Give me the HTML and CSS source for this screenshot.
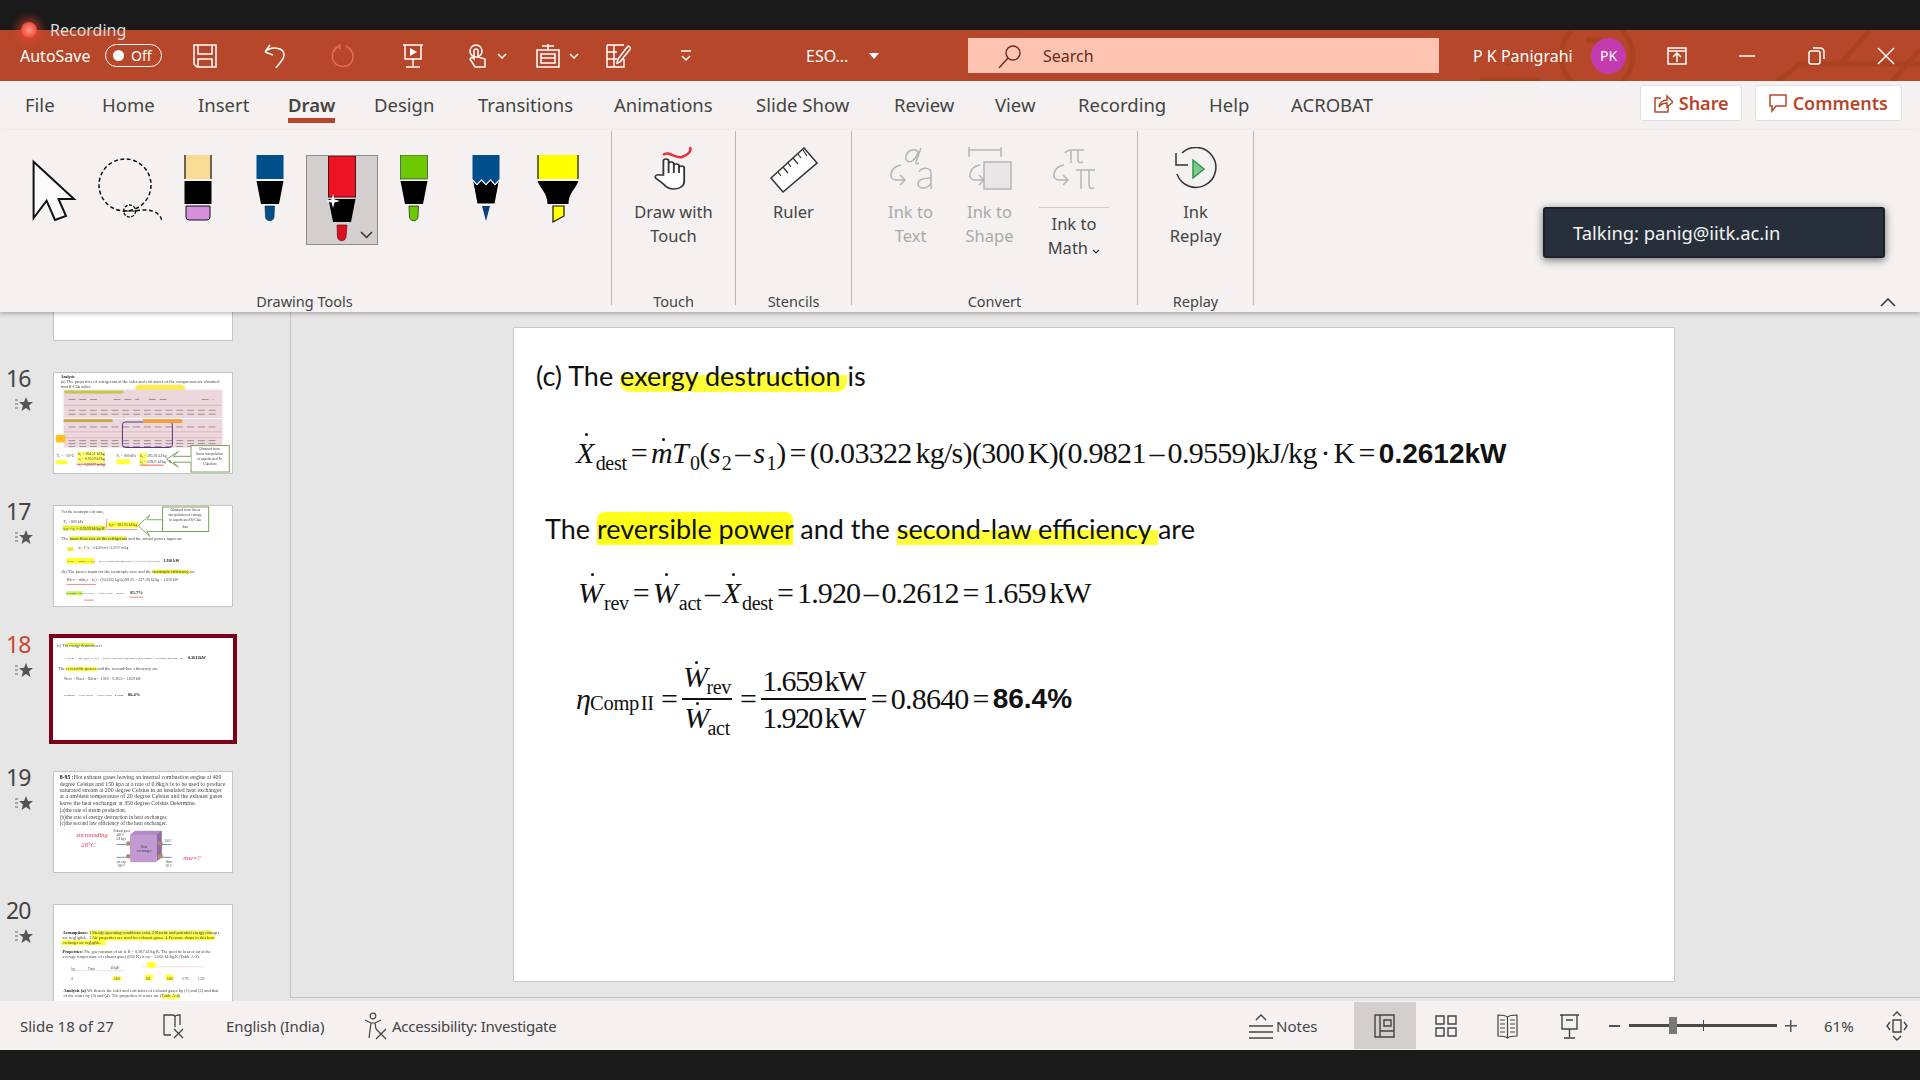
FILE: index.html
```html
<!DOCTYPE html>
<html lang="en">
<head>
    <meta charset="UTF-8">
    <title>ESO - PowerPoint</title>
    <link rel="stylesheet" href="styles.css">
</head>
<body>
    <div class="screen">
        <div class="blackbar"></div>

        <div class="recording">
            <span class="rec_dot"></span>
            <span>Recording</span>
        </div>

        <!-- title bar -->
        <header class="titlebar">
            <svg class="circuit" width="460" height="51" viewBox="0 0 460 51">
                <circle cx="137" cy="26" r="36" fill="none" stroke="#a8421f" stroke-width="5"/>
                <path d="M125 10h24M137 10v14M20 50h60M340 34h120M340 34l-22 17M410 0l-30 34M460 20l-28 31" fill="none" stroke="#a8421f" stroke-width="5"/>
                <circle cx="48" cy="30" r="5" fill="none" stroke="#a8421f" stroke-width="2"/>
            </svg>
            <span class="autosave">AutoSave</span>
            <span class="toggle"><i></i><b>Off</b></span>
            <svg class="ti ti_save" width="24" height="24" viewBox="0 0 24 24"><path d="M1 1h22v22H4l-3-3zM5 1v9h14V1M5 23v-8h14v8"/></svg>
            <svg class="ti ti_undo" width="24" height="24" viewBox="0 0 24 24"><path d="M2 8l5-7M2 8l8 3M2 8c6-6 19-5 19 3 0 5-5 8-8 13"/></svg>
            <svg class="ti ti_redo" width="24" height="24" viewBox="0 0 24 24"><path d="M8 2C2 5 0 11 2 16c3 7 13 9 18 3 4-6 2-13-5-17M9 0v5"/></svg>
            <svg class="ti ti_show" width="24" height="24" viewBox="0 0 24 24"><path d="M2 1h20M4 1v14h16V1M12 15v7M5 23h14"/><path class="fill" d="M9 4l7 4-7 4z"/></svg>
            <svg class="ti ti_touch" width="24" height="24" viewBox="0 0 24 24"><circle cx="9" cy="7" r="6"/><path d="M7 7v8l-2-2-2 2 5 8h10v-8l-7-2V7a2 2 0 0 0-4 0z"/></svg>
            <svg class="chev" width="10" height="6" viewBox="0 0 10 6"><path d="M1 1l4 4 4-4"/></svg>
            <svg class="ti ti_obj" width="24" height="24" viewBox="0 0 24 24"><path d="M1 6h22v17H1zM5 10h14v9H5zM12 6V0M6 2h12M5 14h14"/></svg>
            <svg class="chev ch_obj" width="10" height="6" viewBox="0 0 10 6"><path d="M1 1l4 4 4-4"/></svg>
            <svg class="ti ti_form" width="25" height="24" viewBox="0 0 25 24"><path d="M1 1h17M1 1v22h17v-8M1 8h10M1 15h10M8 1v22M12 15l10-13 3 2-11 14-3 1z"/></svg>
            <svg class="ti_more" width="12" height="14" viewBox="0 0 12 14"><path d="M1 2h10M2 7l4 4 4-4" fill="none" stroke="#fff" stroke-width="1.5"/></svg>
            <span class="docname">ESO...</span>
            <span class="docarrow"></span>
            <div class="searchbox">
                <svg width="24" height="24" viewBox="0 0 24 24"><circle cx="15" cy="9" r="7" fill="none" stroke="#6b2a18" stroke-width="1.4"/><path d="M10 14L1 24" stroke="#6b2a18" stroke-width="1.4"/></svg>
                <span>Search</span>
            </div>
            <span class="username">P K Panigrahi</span>
            <span class="avatar">PK</span>
            <svg class="ti win_disp" width="20" height="20" viewBox="0 0 20 20"><path d="M1 2h18v16H1zM1 5h18M10 16V8M6 11l4-4 4 4"/></svg>
            <svg class="ti win_min" width="16" height="2" viewBox="0 0 16 2"><path d="M0 1h16"/></svg>
            <svg class="ti win_max" width="17" height="18" viewBox="0 0 17 18"><rect x="1" y="4" width="11" height="13" rx="2"/><path d="M5 1h7c3 0 4 1 4 4v7"/></svg>
            <svg class="ti win_close" width="18" height="18" viewBox="0 0 18 18"><path d="M1 1l16 16M17 1L1 17"/></svg>
        </header>

        <!-- tabs -->
        <nav class="tabs">
            <span class="tab">File</span>
            <span class="tab">Home</span>
            <span class="tab">Insert</span>
            <span class="tab tab_on">Draw</span>
            <span class="tab">Design</span>
            <span class="tab">Transitions</span>
            <span class="tab">Animations</span>
            <span class="tab">Slide Show</span>
            <span class="tab">Review</span>
            <span class="tab">View</span>
            <span class="tab">Recording</span>
            <span class="tab">Help</span>
            <span class="tab">ACROBAT</span>
            <span></span>
            <span class="tabbtn tabbtn_share">
                <svg width="20" height="20" viewBox="0 0 20 20"><path d="M8 5H2v14h13v-6M6 14c1-5 4-7 8-7V3l6 6-6 5v-4c-4 0-6 1-8 4z" fill="none" stroke="#b7472a" stroke-width="1.5"/></svg>
                Share
            </span>
            <span class="tabbtn">
                <svg width="18" height="20" viewBox="0 0 18 20"><path d="M1 2h16v11H7l-4 5v-5H1z" fill="none" stroke="#b7472a" stroke-width="1.5"/></svg>
                Comments
            </span>
        </nav>

        <!-- ribbon -->
        <section class="ribbon">
            <div class="group g_tools">
                <div class="tools">
                    <svg width="72" height="90" viewBox="0 0 72 90"><path d="M15.6 6.7L56 44H40.5L48 61l-11 4-8.400-19.300L15.600 63z" fill="#fbfbfb" stroke="#111" stroke-width="2"/></svg>
                    <svg width="72" height="90" viewBox="0 0 72 90"><g fill="none" stroke="#111" stroke-width="1.500" stroke-dasharray="4 2.500"><circle cx="35" cy="30" r="26"/><path d="M46 56c12-3 24 0 26 10"/></g><circle cx="39.600" cy="56" r="6" fill="none" stroke="#111" stroke-width="1.300" stroke-dasharray="3 1.500"/><path d="M33 56h13" stroke="#111"/></svg>
                    <svg width="72" height="90" viewBox="0 0 72 90"><rect x="22.500" width="27" height="24" fill="#f9dc94"/><path d="M23 0v24M49 0v24" stroke="#111" stroke-width="1.200"/><rect x="22.500" y="26" width="27" height="23" fill="#000"/><path d="M24 51h24v11a3 3 0 0 1-3 3H27a3 3 0 0 1-3-3z" fill="#d68fdc" stroke="#111"/></svg>
                    <svg width="72" height="90" viewBox="0 0 72 90"><rect x="22.500" width="27" height="24" fill="#004f8b"/><path d="M22.500 26h27L45 49H27z" fill="#000"/><path d="M31 51h9.500l-.5 11c-.5 5-8 5-8.500 0z" fill="#004f8b" stroke="#123" stroke-width=".6"/></svg>
                    <div class="tool_on">
                        <svg width="70" height="88" viewBox="0 0 70 88"><rect x="21.500" width="27" height="41" fill="#ec1325" stroke="#501015" stroke-width="1"/><path d="M21.500 43h27L44 66H26z" fill="#000"/><path d="M30 69h10l-1 12c-.5 5-8 5-8.500 0z" fill="#d8101f" stroke="#601" stroke-width=".6"/><path d="M26 38l1.500 5.500L33 45l-5.500 1.500L26 52l-1.500-5.500L19 45l5.500-1.500z" fill="#fff"/><path d="M54 76l5.500 5.500L65 76" fill="none" stroke="#333" stroke-width="1.500"/></svg>
                    </div>
                    <svg width="72" height="90" viewBox="0 0 72 90"><rect x="22.500" width="27" height="24" fill="#6cc900" stroke="#223" stroke-width=".6"/><path d="M22.500 26h27L45 49H27z" fill="#000"/><path d="M31 51h9.500l-.5 11c-.5 5-8 5-8.500 0z" fill="#6cc900" stroke="#232" stroke-width=".8"/></svg>
                    <svg width="72" height="90" viewBox="0 0 72 90"><path d="M22.500 0h27v24l-4.500 5-4.500-5-4.500 5-4.500-5-4.500 5-4.500-5z" fill="#004f8b"/><path d="M22.500 25l4.500 5 4.500-5 4.500 5 4.500-5 4.500 5 4.500-5L45 49H27z" fill="#000" stroke="#fff" stroke-width="1"/><path d="M32 51h8l-4 15z" fill="#0a3f78"/></svg>
                    <svg width="72" height="90" viewBox="0 0 72 90"><rect x="15.500" width="41" height="24" fill="#ff0"/><path d="M16 0v24M56 0v24" stroke="#111" stroke-width="1.200"/><path d="M15.500 26h41c-3 8-10 12-10 23H25.500c0-11-7-15-10-23z" fill="#000"/><path d="M31 51h11v10l-11 6z" fill="#ff0" stroke="#111" stroke-width="1.200"/></svg>
                </div>
                <div class="glabel">Drawing Tools</div>
            </div>

            <div class="group g_touch">
                <div class="gbody">
                    <div class="rbtn">
                        <div class="ricon">
                            <svg width="44" height="46" viewBox="0 0 44 46"><path d="M11 10C17 5 22 14 30 12 36 10 40 6 38 2" fill="none" stroke="#ec2d3c" stroke-width="2.500"/><path transform="translate(1 0) scale(1.3 1)" d="M8 30V16a2 2 0 0 1 4 0v12-9a2 2 0 0 1 4 0v9-7a2 2 0 0 1 4 0v7-5a2 2 0 0 1 4 0v13c0 5-3 8-8 8-4 0-6-2-8-5l-6-6c-1-2 1-4 3-3z" fill="#fff" stroke="#333" stroke-width="1.400"/></svg>
                        </div>
                        <div>Draw with<br>Touch</div>
                    </div>
                </div>
                <div class="glabel">Touch</div>
            </div>

            <div class="group g_sten">
                <div class="gbody">
                    <div class="rbtn">
                        <div class="ricon">
                            <svg class="icon_low" width="48" height="46" viewBox="0 0 48 46"><path d="M1 31L34 1l13 15-34 29z" fill="#fff" stroke="#333" stroke-width="1.500"/><path d="M8 25l3 4M13 20l5 6M18 16l3 4M23 11l5 6M28 7l3 4M33 3l4 6" stroke="#333" stroke-width="1.200"/></svg>
                        </div>
                        <div>Ruler</div>
                    </div>
                </div>
                <div class="glabel">Stencils</div>
            </div>

            <div class="group g_conv">
                <div class="gbody">
                    <div class="rbtn rbtn_off">
                        <div class="ricon">
                            <svg class="off_icon" width="44" height="44" viewBox="0 0 44 44"><path d="M32 1L27 15c-1 2 1 2 3 1M30 6c-3-5-11-4-13 3-1 5 3 7 6 5 3-2 5-5 6-8M30 25c3-5 12-5 12 1v16M42 31c-6 0-13 1-13 6 0 6 10 5 13-1M12 18C1 20-1 32 6 33h10M11 28l5 5-5 5"/></svg>
                        </div>
                        <div>Ink to<br>Text</div>
                    </div>
                    <div class="rbtn rbtn_off">
                        <div class="ricon">
                            <svg class="off_icon" width="44" height="44" viewBox="0 0 44 44"><path d="M1 3h32M1 0v10M33 0v10"/><rect x="16" y="15" width="27" height="27" fill="#e8e6e6"/><path d="M12 18C1 20-1 32 6 33h10M11 28l5 5-5 5"/></svg>
                        </div>
                        <div>Ink to<br>Shape</div>
                    </div>
                    <div class="rbtn rbtn_math">
                        <div class="ricon ricon_math">
                            <svg class="off_icon" width="44" height="44" viewBox="0 0 44 44"><path d="M13 6c2-3 4-3 7-3h12M19 3v13M26 3v10c0 3 2 3 5 2M24 23h19M29 23v19M37 23v15c0 3 2 4 5 3M12 18C1 20-1 32 6 33h10M11 28l5 5-5 5"/></svg>
                        </div>
                        <div class="math_txt">Ink to<br>Math <svg width="8" height="5" viewBox="0 0 8 5"><path d="M1 1l3 3 3-3" fill="none" stroke="#333" stroke-width="1.200"/></svg></div>
                    </div>
                </div>
                <div class="glabel">Convert</div>
            </div>

            <div class="group g_replay">
                <div class="gbody">
                    <div class="rbtn">
                        <div class="ricon">
                            <svg class="icon_low" width="44" height="44" viewBox="0 0 44 44"><path d="M8 6a20 20 0 1 1-5 21" fill="none" stroke="#333" stroke-width="1.500"/><path d="M2 6v12h12" fill="none" stroke="#333" stroke-width="1.500"/><path d="M19 13l11 9-11 9z" fill="#7fc98f" stroke="#2d9a4c" stroke-width="1.500"/></svg>
                        </div>
                        <div>Ink<br>Replay</div>
                    </div>
                </div>
                <div class="glabel">Replay</div>
            </div>

            <svg class="collapse" width="16" height="10" viewBox="0 0 16 10"><path d="M1 8l7-7 7 7" fill="none" stroke="#333" stroke-width="1.500"/></svg>
            <div class="talking">Talking: panig@iitk.ac.in</div>
        </section>

        <!-- slides and editor -->
        <main class="workspace">
            <aside class="sidebar">
                <div class="item item_prev">
                    <div class="num"></div>
                    <div class="thumb"></div>
                </div>

                <div class="item">
                    <div class="num">16<svg class="star" width="18" height="16" viewBox="0 0 18 16"><path d="M0 4h3M0 8h3M0 12h3" stroke="#666" stroke-width="1.200"/><path d="M11 1l2 5h5l-4 3.500 1.500 5.500-4.500-3-4.500 3L8 9.500 4 6h5z" fill="#555"/></svg></div>
                    <div class="thumb">
                        <svg viewBox="0 0 180 102">
                            <text x="6" y="5" class="tb">Analysis</text>
                            <text x="6" y="10" class="ts" textLength="162" lengthAdjust="spacingAndGlyphs">(a) The properties of refrigerant at the inlet and exit states of the compressor are obtained</text>
                            <text x="6" y="15" class="ts">from R-134a tables:</text>
                            <rect x="82" y="12" width="51" height="10" rx="4" fill="#ffe94d"/>
                            <text x="88" y="20" class="tred">Suction line</text>
                            <rect x="9" y="17" width="162" height="29" fill="#ecd8dc"/>
                            <rect x="9" y="47" width="162" height="29" fill="#ecd8dc"/>
                            <rect x="10" y="18" width="60" height="3" fill="#c9c44a"/>
                            <rect x="9" y="47" width="50" height="3" fill="#c9a94a"/>
                            <path d="M9 33h162M9 60h162M9 66h162" stroke="#c49aa2" stroke-width=".5"/>
                            <path d="M14 27h30M60 27h26M96 27h20M150 27h12M14 38h150M14 42h150M14 55h150M14 69h150M14 72h150M14 75h150" stroke="#8a7a80" stroke-width=".8" stroke-dasharray="7 4"/>
                            <rect x="69" y="50" width="51" height="26" rx="3" fill="none" stroke="#5b2a86" stroke-width="1"/>
                            <rect x="90" y="47" width="40" height="4" fill="#f0a040"/>
                            <rect x="1" y="63" width="10" height="8" rx="2" fill="#ffc020"/>
                            <rect x="139" y="74" width="39" height="27" fill="#fff" stroke="#7a9f55"/>
                            <text x="158" y="79" class="tc">Obtained from</text>
                            <text x="158" y="84" class="tc">linear interpolation</text>
                            <text x="158" y="89" class="tc">of superheated R-</text>
                            <text x="158" y="94" class="tc">134a data</text>
                            <path d="M139 85h-18l5-5-12 8 12 8-5-5h18" fill="#fff" stroke="#7a9f55"/>
                            <rect x="1" y="89" width="12" height="4" fill="#ff3"/>
                            <text x="2" y="86" class="ts" textLength="18" lengthAdjust="spacingAndGlyphs">T₁ = −30°C</text>
                            <rect x="23" y="80" width="28" height="12" fill="#ffff70"/>
                            <text x="24" y="84" class="ts" textLength="27" lengthAdjust="spacingAndGlyphs">h₁ = 284.31 kJ/kg</text>
                            <text x="24" y="89" class="ts" textLength="27" lengthAdjust="spacingAndGlyphs">s₁ = 0.9559 kJ/kg</text>
                            <text x="24" y="95" class="ts" textLength="27" lengthAdjust="spacingAndGlyphs">v₁ = 0.22577 m³/kg</text>
                            <rect x="63" y="88" width="14" height="5" fill="#ff3"/>
                            <text x="63" y="86" class="ts" textLength="20" lengthAdjust="spacingAndGlyphs">P₂ = 800 kPa</text>
                            <rect x="86" y="81" width="8" height="13" fill="#ffff70"/>
                            <text x="87" y="86" class="ts" textLength="27" lengthAdjust="spacingAndGlyphs">h₂ = 295.93 kJ/kg</text>
                            <text x="87" y="92" class="ts" textLength="32" lengthAdjust="spacingAndGlyphs">s₂ = 0.9821 kJ/kg · K</text>
                            <path d="M22 93h30M87 94h24" stroke="#e33" stroke-width=".8"/>
                        </svg>
                    </div>
                </div>

                <div class="item">
                    <div class="num">17<svg class="star" width="18" height="16" viewBox="0 0 18 16"><path d="M0 4h3M0 8h3M0 12h3" stroke="#666" stroke-width="1.200"/><path d="M11 1l2 5h5l-4 3.500 1.500 5.500-4.500-3-4.500 3L8 9.500 4 6h5z" fill="#555"/></svg></div>
                    <div class="thumb">
                        <svg viewBox="0 0 180 102">
                            <text x="7" y="7" class="ts">For the isentropic exit state,</text>
                            <text x="9" y="17" class="ts">P₂ = 800 kPa</text>
                            <rect x="8" y="20" width="44" height="5" fill="#e8ee30"/>
                            <text x="9" y="24" class="ts" textLength="42" lengthAdjust="spacingAndGlyphs">s₂s = s₁ = 0.9559 kJ/kg·K</text>
                            <rect x="54" y="16" width="31" height="6" fill="#ff3"/>
                            <text x="55" y="20" class="ts" textLength="29" lengthAdjust="spacingAndGlyphs">h₂s = 281.95 kJ/kg</text>
                            <path d="M53 13v11M54 24h30" stroke="#c55" stroke-width=".6"/>
                            <path d="M110 14H94l3-5-12 11 12 11-3-5h16z" fill="#fff" stroke="#88a860"/>
                            <rect x="110" y="1" width="47" height="25" fill="#fff" stroke="#7a9f55"/>
                            <text x="133" y="5" class="tc">Obtained from linear</text>
                            <text x="133" y="10" class="tc">interpolation of entropy</text>
                            <text x="133" y="15" class="tc">in superheated R-134a</text>
                            <text x="133" y="22" class="tc">data</text>
                            <rect x="15" y="31" width="58" height="4" fill="#e8ee30"/>
                            <text x="7" y="34.500" class="ts" textLength="123" lengthAdjust="spacingAndGlyphs">The mass flow rate of the refrigerant and the actual power input are</text>
                            <rect x="13" y="42" width="6" height="4" fill="#e8ee30"/>
                            <text x="24" y="44" class="ts" textLength="51" lengthAdjust="spacingAndGlyphs">ṁ = V̇₁/v₁ = 0.45/60 m³/s / 0.22577 m³/kg</text>
                            <rect x="12" y="53" width="28" height="6" fill="#ff3"/>
                            <text x="12" y="57.500" class="tn" textLength="98" lengthAdjust="spacingAndGlyphs">Ẇact = ṁ(h₂ − h₁) = (0.03322 kg/s)(295.93 − 237.19) kJ/kg =</text>
                            <text x="111" y="57.500" class="tb" textLength="16" lengthAdjust="spacingAndGlyphs">1.920 kW</text>
                            <rect x="100" y="65" width="37" height="4" fill="#e8ee30"/>
                            <text x="7" y="68.500" class="ts" textLength="136" lengthAdjust="spacingAndGlyphs">(b) The power input for the isentropic case and the isentropic efficiency are</text>
                            <text x="12" y="77" class="ts" textLength="114" lengthAdjust="spacingAndGlyphs">Ẇrev = ṁ(h₂s − h₁) = (0.03322 kg/s)(281.95 − 237.19) kJ/kg = 1.659 kW</text>
                            <rect x="12" y="87" width="16" height="4" fill="#c8ee50"/>
                            <text x="12" y="90" class="tn" textLength="62" lengthAdjust="spacingAndGlyphs">ηComp = Ẇrev/Ẇact = 1.659/1.920 = 0.8571 =</text>
                            <text x="77" y="90" class="tb" textLength="13" lengthAdjust="spacingAndGlyphs">85.7%</text>
                            <path d="M76 93h14M12 80h30M30 96h10" stroke="#d33" stroke-width=".6"/>
                        </svg>
                    </div>
                </div>

                <div class="item item_on">
                    <div class="num">18<svg class="star" width="18" height="16" viewBox="0 0 18 16"><path d="M0 4h3M0 8h3M0 12h3" stroke="#666" stroke-width="1.200"/><path d="M11 1l2 5h5l-4 3.500 1.500 5.500-4.500-3-4.500 3L8 9.500 4 6h5z" fill="#555"/></svg></div>
                    <div class="thumb">
                        <svg viewBox="0 0 180 102">
                            <rect x="13" y="5" width="28" height="3" fill="#e8ee30"/>
                            <text x="4" y="9" class="ts" textLength="45" lengthAdjust="spacingAndGlyphs">(c) The exergy destruction is</text>
                            <text x="12" y="21" class="tn" textLength="122" lengthAdjust="spacingAndGlyphs">Ẋdest = ṁT₀(s₂ − s₁) = (0.03322 kg/s)(300 K)(0.9821 − 0.9559)kJ/kg · K =</text>
                            <text x="135" y="21" class="tb" textLength="18" lengthAdjust="spacingAndGlyphs">0.2612kW</text>
                            <rect x="13" y="29" width="31" height="4" fill="#ff3"/>
                            <text x="5" y="32" class="ts" textLength="100" lengthAdjust="spacingAndGlyphs">The reversible power and the second-law efficiency are</text>
                            <text x="11" y="42" class="ts" textLength="77" lengthAdjust="spacingAndGlyphs">Ẇrev = Ẇact − Ẋdest = 1.920 − 0.2612 = 1.659 kW</text>
                            <text x="11" y="58" class="tn" textLength="62" lengthAdjust="spacingAndGlyphs">ηCompII = Ẇrev/Ẇact = 1.659/1.920 = 0.8640 =</text>
                            <text x="75" y="58" class="tb" textLength="12" lengthAdjust="spacingAndGlyphs">86.4%</text>
                        </svg>
                    </div>
                </div>

                <div class="item">
                    <div class="num">19<svg class="star" width="18" height="16" viewBox="0 0 18 16"><path d="M0 4h3M0 8h3M0 12h3" stroke="#666" stroke-width="1.200"/><path d="M11 1l2 5h5l-4 3.500 1.500 5.500-4.500-3-4.500 3L8 9.500 4 6h5z" fill="#555"/></svg></div>
                    <div class="thumb">
                        <svg viewBox="0 0 180 102">
                            <text x="5" y="7" class="tl" textLength="165" lengthAdjust="spacingAndGlyphs"><tspan class="tlb">8-95 :</tspan>Hot exhaust gases leaving an internal combustion engine at 400</text>
                            <text x="5" y="14" class="tl" textLength="169" lengthAdjust="spacingAndGlyphs">degree Celsius and 150 kpa at a rate of 0.8kg/s is to be used to produce</text>
                            <text x="5" y="20.500" class="tl" textLength="165" lengthAdjust="spacingAndGlyphs">saturated stream at 200 degree Celsius in an insulated heat exchanger</text>
                            <text x="5" y="27" class="tl" textLength="166" lengthAdjust="spacingAndGlyphs">at a ambient temperature of 20 degree Celsius and the exhaust gases</text>
                            <text x="5" y="34" class="tl" textLength="139" lengthAdjust="spacingAndGlyphs">leave the heat exchanger at 350 degree Celsius Determine.</text>
                            <text x="5" y="41" class="tl">(a)the rate of steam production.</text>
                            <text x="5" y="48" class="tl">(b)the rate of exergy destruction in heat exchanger.</text>
                            <text x="5" y="54.500" class="tl">(c)the second law efficiency of the heat exchanger.</text>
                            <path d="M77 64l5-4h27v27h-5v-1H77z" fill="#b48ac4"/>
                            <path d="M104 64l5-4v27l-5 4z" fill="#8f6aa6"/>
                            <rect x="77" y="64" width="27" height="28" fill="#c09ad0"/>
                            <path d="M63 74h10M73 87H63M109 74h10M119 87h-10" stroke="#4a7ab0" stroke-width=".8"/>
                            <rect x="73" y="71" width="4" height="4" fill="#b08a60"/>
                            <rect x="73" y="84" width="4" height="4" fill="#b08a60"/>
                            <rect x="105" y="71" width="5" height="4" fill="#b08a60"/>
                            <rect x="105" y="84" width="5" height="4" fill="#b08a60"/>
                            <text x="91" y="78" class="tc">Heat</text>
                            <text x="91" y="82" class="tc">exchanger</text>
                            <text x="60" y="61" class="tm">Exhaust gases</text>
                            <text x="63" y="65" class="tm">400°C</text>
                            <text x="63" y="69" class="tm">0.8 kg/s</text>
                            <text x="63" y="93" class="tm">sat. vap</text>
                            <text x="64" y="97" class="tm">200°C</text>
                            <text x="112" y="71" class="tm">350°C</text>
                            <text x="113" y="93" class="tm">Water</text>
                            <text x="113" y="97" class="tm">20°C</text>
                            <text x="22" y="66" class="thand" textLength="32" lengthAdjust="spacingAndGlyphs">surrounding</text>
                            <text x="27" y="76" class="thand">20°C</text>
                            <text x="131" y="90" class="thand">ṁw=?</text>
                        </svg>
                    </div>
                </div>

                <div class="item">
                    <div class="num">20<svg class="star" width="18" height="16" viewBox="0 0 18 16"><path d="M0 4h3M0 8h3M0 12h3" stroke="#666" stroke-width="1.200"/><path d="M11 1l2 5h5l-4 3.500 1.500 5.500-4.500-3-4.500 3L8 9.500 4 6h5z" fill="#555"/></svg></div>
                    <div class="thumb">
                        <svg viewBox="0 0 180 102">
                            <rect x="36" y="26" width="125" height="5" fill="#f2f24a"/>
                            <rect x="38" y="31" width="125" height="5" fill="#ff3"/>
                            <rect x="7" y="36" width="45" height="5" fill="#ff3"/>
                            <text x="8" y="30" class="ts" textLength="160" lengthAdjust="spacingAndGlyphs"><tspan class="tb">Assumptions:</tspan> 1 Steady operating conditions exist. 2 Kinetic and potential energy changes</text>
                            <text x="8" y="35" class="ts" textLength="155" lengthAdjust="spacingAndGlyphs">are negligible. 3 Air properties are used for exhaust gases. 4 Pressure drops in this heat</text>
                            <text x="8" y="40" class="ts">exchanger are negligible.</text>
                            <text x="8" y="49" class="ts" textLength="151" lengthAdjust="spacingAndGlyphs"><tspan class="tb">Properties:</tspan> The gas constant of air is R = 0.287 kJ/kg.K. The specific heat of air at the</text>
                            <text x="8" y="54" class="ts" textLength="140" lengthAdjust="spacingAndGlyphs">average temperature of exhaust gases (650 K) is cp = 1.063 kJ/kg.K (Table A-2).</text>
                            <path d="M16 67h55M90 63h62" stroke="#eebfd0" stroke-width=".6"/>
                            <rect x="94" y="58" width="9" height="6" fill="#ff3"/>
                            <rect x="59" y="73" width="9" height="4" fill="#ff3"/>
                            <rect x="92" y="71" width="8" height="6" fill="#ff3"/>
                            <rect x="113" y="71" width="8" height="6" fill="#ff3"/>
                            <text x="17" y="66" class="tm">hg</text>
                            <text x="34" y="66" class="tm">Tmax</text>
                            <text x="57" y="65" class="tm">kJ/kgK</text>
                            <text x="17" y="76" class="tm">8</text>
                            <text x="60" y="76" class="tm">1.063</text>
                            <text x="93" y="76" class="tm">650</text>
                            <text x="114" y="76" class="tm">1.063</text>
                            <text x="130" y="76" class="tm">0.776</text>
                            <text x="146" y="76" class="tm">1.376</text>
                            <rect x="109" y="91" width="18" height="5" fill="#ff3" opacity=".8"/>
                            <text x="9" y="89" class="ts" textLength="158" lengthAdjust="spacingAndGlyphs"><tspan class="tb">Analysis (a)</tspan> We denote the inlet and exit states of exhaust gases by (1) and (2) and that</text>
                            <text x="9" y="94" class="ts" textLength="119" lengthAdjust="spacingAndGlyphs">of the water by (3) and (4). The properties of water are (Table A-4)</text>
                        </svg>
                    </div>
                </div>
            </aside>

            <div class="editor">
                <article class="slide">
                    <p class="stext">(c) The <span class="hl_a">exergy destruction </span>is</p>

                    <div class="eq eq_1">
                        <i class="dot">X</i><sub>dest</sub><span class="op">=</span><i class="dot dot_m">m</i><i>T</i><sub>0</sub>(<i>s</i><sub>2</sub> – <i>s</i><sub>1</sub>)<span class="op">=</span>(0.03322 kg/s)(300 K)(0.9821 – 0.9559)kJ/kg · K<span class="op">=</span><b>0.2612kW</b>
                    </div>

                    <p class="stext stext_2">The <span class="hl_b">reversible power</span> and the <span class="hl_c">second-law efficiency </span>are</p>

                    <div class="eq eq_2">
                        <i class="dot">W</i><sub>rev</sub><span class="op">=</span><i class="dot">W</i><sub>act</sub> – <i class="dot">X</i><sub>dest</sub><span class="op">=</span>1.920 – 0.2612<span class="op">=</span>1.659 kW
                    </div>

                    <div class="eq eq_3">
                        <i>η</i><sub class="sub_mid">Comp II</sub><span class="op op_w">=</span>
                        <span class="frac">
                            <span class="fnum"><i class="dot">W</i><sub>rev</sub></span>
                            <span class="fden"><i class="dot">W</i><sub>act</sub></span>
                        </span><span class="op op_w">=</span>
                        <span class="frac">
                            <span class="fnum">1.659 kW</span>
                            <span class="fden">1.920 kW</span>
                        </span><span class="op">=</span>0.8640<span class="op">=</span><b>86.4%</b>
                    </div>
                </article>
            </div>
        </main>

        <!-- status bar -->
        <footer class="status">
            <span class="st_slide">Slide 18 of 27</span>
            <svg class="st_spell" width="22" height="26" viewBox="0 0 22 26"><path d="M2 22V2h8c2 0 3 1 3 2v10M13 4c0-1 2-2 4-2h1v10M2 22h7" fill="none" stroke="#444" stroke-width="1.300"/><path d="M12 16l9 9M21 16l-9 9" stroke="#444" stroke-width="1.300"/></svg>
            <span class="st_lang">English (India)</span>
            <svg class="st_a11y" width="23" height="28" viewBox="0 0 23 28"><circle cx="9" cy="4" r="2.800" fill="none" stroke="#444" stroke-width="1.200"/><path d="M1 8l6 3-2 15M17 8l-6 3 1 6M7 11h4" fill="none" stroke="#444" stroke-width="1.200"/><path d="M12 17l10 10M22 17L12 27" stroke="#444" stroke-width="1.300"/></svg>
            <span class="st_acc">Accessibility: Investigate</span>

            <svg class="st_notes" width="25" height="26" viewBox="0 0 25 26"><path d="M8 7l5-5 5 5M1 13h24M1 19h24M1 25h24" fill="none" stroke="#444" stroke-width="1.400"/></svg>
            <span class="st_ntext">Notes</span>

            <span class="vbtn vbtn_on"><svg width="21" height="24" viewBox="0 0 21 24"><path d="M1 1h19v22H1zM6 1v22M6 17h14M10 6h7v6h-7z" fill="none" stroke="#444" stroke-width="1.400"/></svg></span>
            <span class="vbtn"><svg width="22" height="24" viewBox="0 0 22 24"><path d="M1 2h8v8H1zM13 2h8v8h-8zM1 14h8v8H1zM13 14h8v8h-8z" fill="none" stroke="#444" stroke-width="1.400"/></svg></span>
            <span class="vbtn"><svg width="21" height="26" viewBox="0 0 21 26"><path d="M1 2c4 0 7 0 9.500 2 2.500-2 5-2 9.500-2v21c-4 0-7 0-9.500 2-2.500-2-5-2-9.500-2zM10.500 4v21M3 7h5M3 11h5M3 15h5M3 19h5M13 7h5M13 11h5M13 15h5M13 19h5" fill="none" stroke="#444" stroke-width="1.200"/></svg></span>
            <span class="vbtn"><svg width="21" height="26" viewBox="0 0 21 26"><path d="M1 2h19M3 2v14h15V2M10.500 16v8M5 25h11M7 7h7" fill="none" stroke="#444" stroke-width="1.400"/></svg></span>

            <span class="z_minus"></span>
            <div class="slider"><i class="s_tick"></i><i class="s_thumb"></i></div>
            <span class="z_plus"></span>
            <span class="z_pct">61%</span>
            <svg class="st_fit" width="22" height="30" viewBox="0 0 22 30"><path d="M7 9h8v12H7zM7 5l4-4 4 4M7 25l4 4 4-4M4 11l-3 4 3 4M18 11l3 4-3 4" fill="none" stroke="#444" stroke-width="1.400"/></svg>
        </footer>

        <div class="blackbar blackbar_low"></div>
    </div>
</body>
</html>
```

FILE: styles.css
```css
* {
    box-sizing: border-box;
}
html, body {
    margin: 0;
    padding: 0;
    background-color: #1a1a1a;
}
.screen {
    position: relative;
    width: 1920px;
    height: 1080px;
    overflow: hidden;
    display: flex;
    flex-direction: column;
    font-family: "Noto Sans", "Open Sans", sans-serif;
    font-size: 17px;
    color: #444;
}
.blackbar {
    height: 30px;
    flex: none;
    background-color: #1a1a1a;
}

/* recording badge lies over the top bars */
.recording {
    position: absolute;
    left: 21px;
    top: 19px;
    z-index: 3;
    display: flex;
    align-items: center;
    gap: 13px;
    font-size: 16px;
    line-height: 22px;
    color: #ddd;
}
.rec_dot {
    width: 16px;
    height: 16px;
    border-radius: 50%;
    background: radial-gradient(circle, #ff9a8c 0, #f0493a 70%);
    box-shadow: 0 0 8px 4px rgba(240, 70, 50, 0.55);
}

/* title bar */
.titlebar {
    position: relative;
    height: 51px;
    flex: none;
    display: flex;
    align-items: center;
    padding: 0 0 0 20px;
    background-color: #b7472a;
    color: #fff;
}
.circuit {
    position: absolute;
    right: 0;
    top: 0;
}
.titlebar > * {
    flex: none;
}
.autosave {
    position: relative;
    width: 76px;
    font-size: 16px;
    white-space: nowrap;
}
.toggle {
    width: 57px;
    height: 23px;
    margin-left: 9px;
    display: flex;
    align-items: center;
    border: 1.5px solid #fff;
    border-radius: 12px;
    padding-left: 7px;
}
.toggle i {
    width: 11px;
    height: 11px;
    border-radius: 50%;
    background-color: #fff;
}
.toggle b {
    margin-left: 7px;
    font-weight: normal;
    font-size: 14px;
    line-height: 20px;
}
.ti {
    position: relative;
    fill: none;
    stroke: #fff;
    stroke-width: 1.5;
}
.ti .fill {
    fill: #fff;
    stroke: none;
}
.ti_save { margin-left: 31px; }
.ti_undo { margin-left: 46px; }
.ti_redo { margin-left: 44px; stroke: #e3705a; }
.ti_show { margin-left: 46px; }
.ti_touch { margin-left: 42px; }
.chev {
    margin-left: 6px;
    fill: none;
    stroke: #fff;
    stroke-width: 1.5;
}
.ti_obj { margin-left: 29px; }
.ch_obj { margin-left: 9px; }
.ti_form { margin-left: 27px; }
.ti_more { margin-left: 49px; }
.docname {
    margin-left: 114px;
    width: 44px;
    font-size: 16px;
}
.docarrow {
    margin-left: 19px;
    width: 0;
    height: 0;
    border-left: 5px solid transparent;
    border-right: 5px solid transparent;
    border-top: 6px solid #fff;
}
.searchbox {
    position: relative;
    width: 471px;
    height: 35px;
    margin-left: 89px;
    display: flex;
    align-items: center;
    padding-left: 30px;
    gap: 21px;
    background-color: #ffc5b2;
    color: #6b2a18;
    font-size: 16px;
}
.username {
    position: relative;
    margin-left: 34px;
    width: 118px;
    font-size: 16px;
    white-space: nowrap;
}
.avatar {
    position: relative;
    width: 35px;
    height: 36px;
    border-radius: 50%;
    display: flex;
    align-items: center;
    justify-content: center;
    background-color: #c43bb0;
    font-size: 14px;
}
.win_disp { margin-left: 41px; }
.win_min { margin-left: 52px; }
.win_max { margin-left: 53px; }
.win_close { margin-left: 52px; }

/* tabs */
.tabs {
    height: 49px;
    flex: none;
    display: grid;
    grid-template-columns: 77px 96px 90px 86px 104px 136px 142px 138px 101px 83px 131px 82px 84px 1fr auto auto;
    padding: 0 18px 0 25px;
    background-color: #f4f1f0;
}
.tab {
    justify-self: start;
    padding-top: 12px;
    line-height: 24px;
    height: 42px;
    white-space: nowrap;
    border-bottom: 5px solid transparent;
    font-size: 18.500px;
}
.tab_on {
    font-weight: 600;
    border-bottom-color: #b7472a;
}
.tabbtn {
    height: 36px;
    margin-top: 4px;
    margin-left: 13px;
    padding: 0 13px;
    display: flex;
    align-items: center;
    gap: 6px;
    background-color: #fff;
    border: 1px solid #e2dfde;
    border-radius: 3px;
    color: #b7472a;
    font-weight: 600;
    font-size: 18px;
}
.tabbtn_share {
    padding: 0 12px;
}

/* ribbon */
.ribbon {
    position: relative;
    z-index: 2;
    height: 182px;
    flex: none;
    display: flex;
    padding: 1px 0 7px;
    background-color: #f4f1f0;
    box-shadow: 0 2px 4px rgba(0, 0, 0, 0.25);
    font-size: 16.500px;
    line-height: 24px;
}
.group {
    height: 174px;
    display: flex;
    flex-direction: column;
    border-right: 1px solid #b9b7b6;
}
.g_tools { width: 612px; padding-left: 18px; }
.g_touch { width: 124px; }
.g_sten { width: 116px; }
.g_conv { width: 286px; }
.g_replay { width: 116px; }
.tools {
    flex: 1;
    display: grid;
    grid-template-columns: repeat(8, 72px);
    padding-top: 24px;
    align-items: start;
}
.tool_on {
    width: 72px;
    height: 90px;
    background-color: #d2cfce;
    border: 1px solid #8a8a8a;
}
.tools svg {
    display: block;
}
.glabel {
    height: 14px;
    text-align: center;
    font-size: 14.500px;
    line-height: 20px;
}
.g_tools .glabel {
    padding-right: 20px;
}
.gbody {
    flex: 1;
    display: flex;
    justify-content: center;
    padding-top: 14px;
}
.g_conv .gbody {
    justify-content: flex-start;
    padding-left: 19px;
}
.rbtn {
    text-align: center;
    white-space: nowrap;
}
.ricon {
    height: 55px;
    display: flex;
    justify-content: center;
}
.icon_low {
    margin-top: 2px;
}
.rbtn_off {
    width: 79px;
    color: #a9a9a9;
}
.rbtn_math {
    width: 70px;
    margin-left: 10px;
}
.ricon_math {
    height: 63px;
    border-bottom: 1px solid #cfcdcc;
}
.math_txt {
    padding-top: 4px;
}
.off_icon {
    margin-top: 2px;
    fill: none;
    stroke: #b5b5b5;
    stroke-width: 1.500;
}
.collapse {
    position: absolute;
    right: 24px;
    top: 168px;
}
/* floating notice */
.talking {
    position: absolute;
    left: 1543px;
    top: 77px;
    width: 342px;
    height: 51px;
    padding-left: 28px;
    display: flex;
    align-items: center;
    background-color: #27303a;
    border: 2px solid #1b2128;
    border-radius: 3px;
    box-shadow: 0 2px 8px rgba(0, 0, 0, 0.55);
    color: #f2f2f2;
    font-size: 18.400px;
}

/* work area */
.workspace {
    flex: 1;
    min-height: 0;
    display: flex;
    background-color: #e6e6e6;
}
.sidebar {
    width: 290px;
    flex: none;
    display: flex;
    flex-direction: column;
    gap: 31px;
    overflow: hidden;
}
.item {
    flex: none;
    height: 102px;
    display: flex;
    padding-left: 6px;
}
.item_prev {
    margin-top: -73px;
}
.num {
    width: 47px;
    flex: none;
    font-size: 23px;
    letter-spacing: -1px;
    line-height: 24px;
    margin-top: -6px;
    color: #444;
}
.star {
    display: block;
    margin: 6px 0 0 9px;
}
.thumb {
    width: 180px;
    height: 102px;
    flex: none;
    background-color: #fff;
    border: 1px solid #c4c4c4;
    overflow: hidden;
}
.thumb svg {
    display: block;
    width: 100%;
    height: 100%;
    filter: blur(0.25px);
}
.thumb text {
    font-family: "Liberation Serif", serif;
    fill: #444;
}
.thumb .ts { font-size: 3.900px; }
.thumb .tn { font-size: 2.700px; }
.thumb .tb { font-size: 3.900px; font-weight: bold; fill: #111; }
.thumb .tc { font-size: 3.600px; text-anchor: middle; }
.thumb .tl { font-size: 5.400px; }
.thumb .tlb { font-weight: bold; fill: #111; }
.thumb .tm { font-size: 3px; }
.thumb .tred { font-size: 5px; fill: #d8203c; }
.thumb .thand { font-size: 7px; font-style: italic; fill: #e0304f; }
.item_on .num {
    color: #c8472e;
}
.item_on .thumb {
    outline: 4px solid #7b0019;
    border: 0;
}
.editor {
    flex: 1;
    height: 686px;
    padding: 15px 0 0 222px;
    border-left: 1px solid #c6c6c6;
    border-bottom: 1px solid #c6c6c6;
}
.slide {
    width: 1162px;
    height: 655px;
    padding: 28px 0 0 22px;
    background-color: #fff;
    border: 1px solid #c8c8c8;
    color: #111;
}
.stext {
    margin: 0;
    font-family: "Lato", sans-serif;
    font-size: 27px;
    line-height: 40px;
    color: #111;
}
.stext_2 {
    margin: 35px 0 0 9px;
}
.hl_a {
    background: linear-gradient(transparent 50%, #ffff3a 50%);
    border-radius: 0 0 10px 10px;
}
.hl_b {
    background-color: #ffff1a;
    border-radius: 8px 8px 0 0;
}
.hl_c {
    background: linear-gradient(transparent 55%, #ffff3a 55%);
}

/* equations */
.eq {
    display: flex;
    align-items: baseline;
    margin-left: 40px;
    font-family: "Liberation Serif", serif;
    font-size: 30px;
    letter-spacing: -0.700px;
    word-spacing: -3px;
    white-space: pre;
    color: #111;
}
.eq_1 { margin-top: 36px; height: 42px; line-height: 42px; }
.eq_2 { margin-top: 23px; margin-left: 42px; height: 42px; line-height: 42px; letter-spacing: -0.900px; }
.eq_3 { margin-top: 46px; align-items: center; letter-spacing: -0.800px; }
.eq sub {
    font-size: 20px;
    vertical-align: baseline;
    position: relative;
    top: 7px;
    margin-left: 2px;
    letter-spacing: -0.300px;
}
.eq_3 sub {
    margin-left: 0;
}
.eq_3 > sub.sub_mid {
    top: 4px;
    font-size: 20.500px;
}
.eq b {
    font-family: "Liberation Sans", sans-serif;
    font-size: 28px;
    letter-spacing: 0;
}
.op {
    margin: 0 4px;
}
.op_w {
    margin-left: 7px;
}
.dot {
    position: relative;
}
.dot::before {
    content: "";
    position: absolute;
    left: 52%;
    top: 1px;
    width: 3px;
    height: 3px;
    border-radius: 50%;
    background-color: #111;
}
.dot_m::before {
    top: 6px;
}
.frac {
    display: inline-flex;
    flex-direction: column;
    align-items: stretch;
    text-align: center;
    margin: 0 1px;
    letter-spacing: -1.600px;
}
.fnum {
    display: block;
    padding: 0 1px 1px;
    border-bottom: 2px solid #111;
    line-height: 33px;
}
.fden {
    display: block;
    padding: 1px 1px 0;
    line-height: 33px;
}

/* status bar */
.status {
    height: 49px;
    flex: none;
    display: flex;
    align-items: center;
    padding-left: 20px;
    background-color: #f4f1f0;
    font-size: 15px;
}
.status > * {
    flex: none;
    white-space: nowrap;
}
.st_slide { width: 95px; }
.st_spell { margin-left: 47px; }
.st_lang { margin-left: 42px; width: 100px; letter-spacing: -0.100px; }
.st_a11y { margin-left: 38px; }
.st_acc { margin-left: 5px; width: 167px; letter-spacing: -0.250px; }
.st_notes { margin-left: 689px; }
.st_ntext { margin-left: 3px; width: 41px; }
.vbtn {
    width: 61.500px;
    height: 47px;
    display: flex;
    align-items: center;
    justify-content: center;
}
.st_ntext + .vbtn {
    margin-left: 37px;
}
.vbtn_on {
    background-color: #d2cfce;
}
.z_minus {
    width: 11px;
    height: 2px;
    margin-left: 9px;
    background-color: #555;
}
.slider {
    position: relative;
    width: 148px;
    height: 3px;
    margin-left: 9px;
    background-color: #4a4a4a;
}
.s_thumb {
    position: absolute;
    left: 40px;
    top: -7px;
    width: 8px;
    height: 17px;
    background-color: #7a7878;
}
.s_tick {
    position: absolute;
    left: 74px;
    top: -4px;
    width: 1px;
    height: 11px;
    background-color: #4a4a4a;
}
.z_plus {
    position: relative;
    width: 12px;
    height: 12px;
    margin-left: 8px;
    background: linear-gradient(#555, #555) center / 12px 1.500px no-repeat,
                linear-gradient(#555, #555) center / 1.500px 12px no-repeat;
}
.z_pct { margin-left: 27px; width: 31px; }
.st_fit { margin-left: 31px; }
.blackbar_low {
    height: 30px;
}
```
